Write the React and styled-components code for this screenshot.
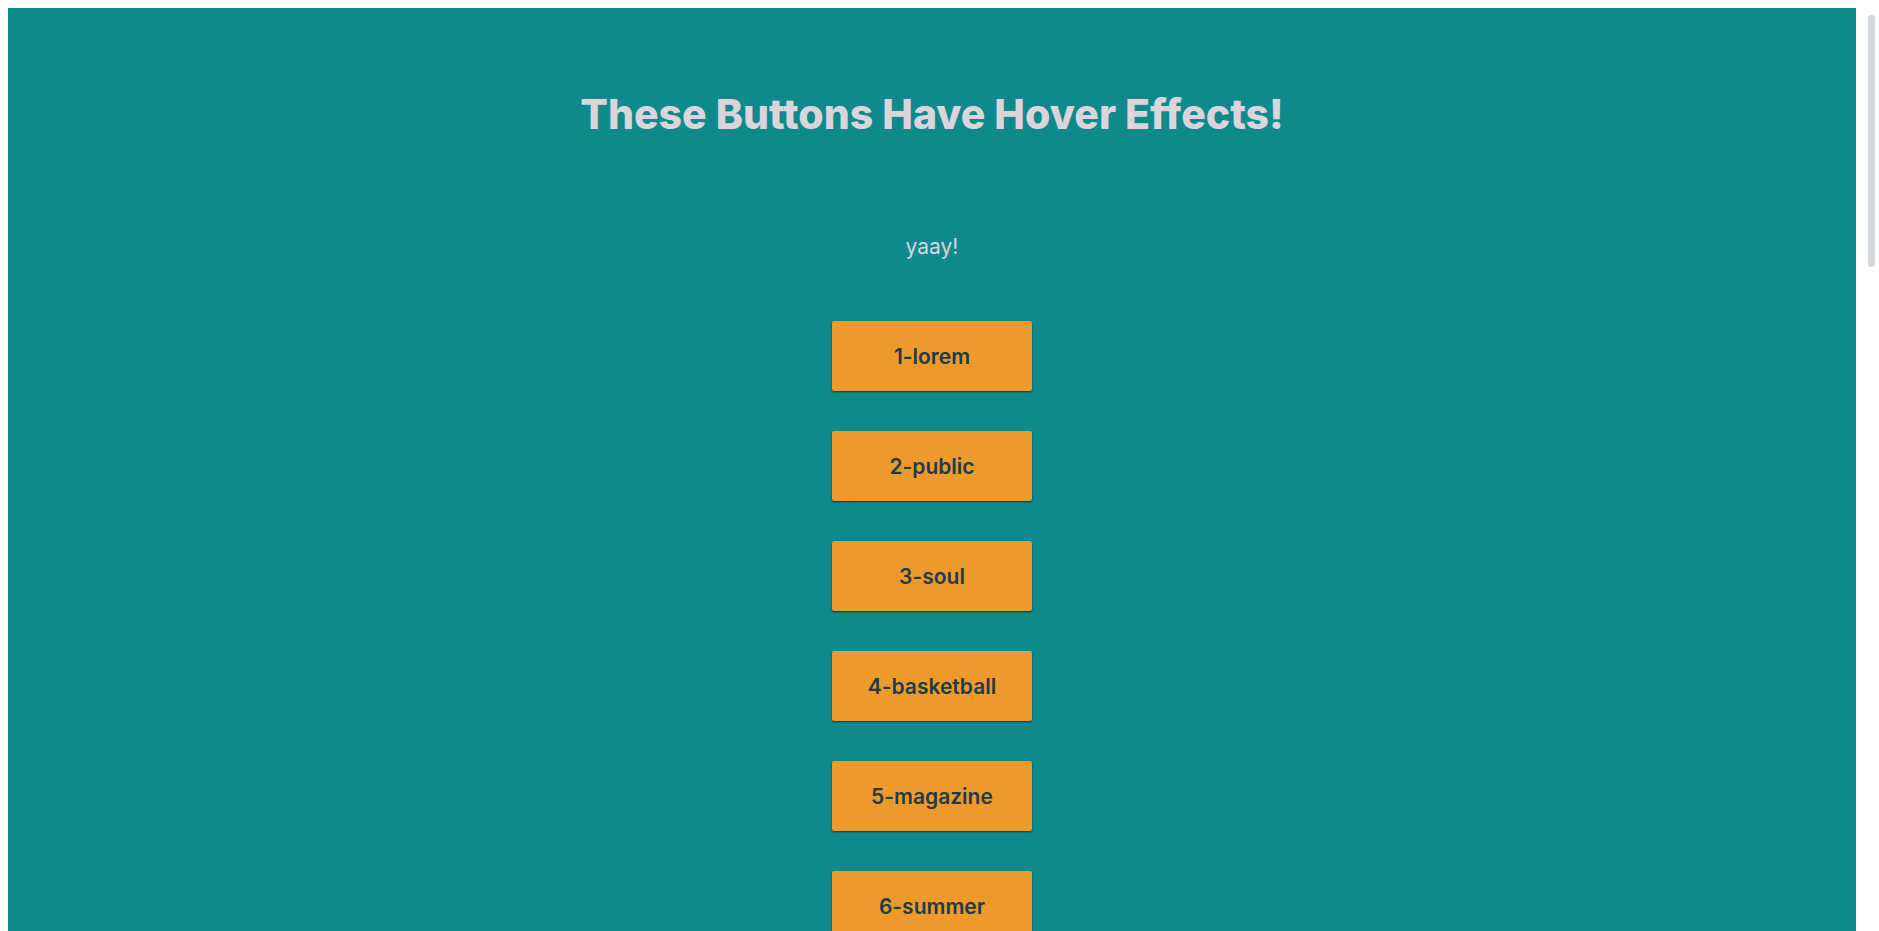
import React from 'react';
import styled, {createGlobalStyle} from 'styled-components';

// the browser scrollbar is hidden in the capture, so its strip is kept as margin
// and its thumb is drawn as a fixed overlay
const GlobalStyle = createGlobalStyle`
  body{
    margin: 8px 23px 8px 8px;
    background: white;
    font-family: Inter, "Liberation Sans", sans-serif;
  }
`;

const ScrollThumb = styled.div`
  position: fixed;
  top: 15px;
  right: 4px;
  width: 7px;
  height: 252px;
  border-radius: 4px;
  background: #d0dae3;
`;

const Page = styled.main`
  display: flex;
  flex-direction: column;
  align-items: center;
  padding: 82px 0 80px 0;
  background: #0f8a8c;
`;

const Title = styled.h1`
  margin: 0;
  font-size: 41px;
  line-height: 48px;
  font-weight: 800;
  color: #dcd4db;
`;

const Note = styled.p`
  margin: 97px 0 62px 0;
  font-size: 21px;
  line-height: 24px;
  color: #dcd4db;
`;

const ButtonList = styled.div`
  display: flex;
  flex-direction: column;
  gap: 40px;
`;

const HoverButton = styled.button`
  display: flex;
  justify-content: center;
  align-items: center;
  width: 200px;
  height: 70px;
  padding: 0;

  border: none;
  border-radius: 2px;
  background: #ec9a2b;
  color: #1d3b4a;
  box-shadow: 0 1px 2px rgba(0, 0, 0, 0.6);

  font-family: inherit;
  font-size: 21px;
  font-weight: 600;
  cursor: pointer;
  transition: 200ms;

  &:hover{
    background: #1d3b4a;
    color: #ec9a2b;
  }
`;

const words = [
    "lorem", "public", "soul", "basketball", "magazine", "summer",
    "ocean", "garden", "rocket", "window", "planet", "coffee",
    "silver", "thunder", "pencil", "forest", "mirror", "candle",
    "river", "castle", "violin", "meadow", "lantern", "harbor",
    "comet", "velvet", "falcon", "orbit"
];

const App = () => {
    return (
        <>
            <GlobalStyle/>
            <Page>
                <Title>These Buttons Have Hover Effects!</Title>
                <Note>yaay!</Note>
                <ButtonList>
                    {words.map((word, i) => (
                        <HoverButton key={word}>{(i + 1) + "-" + word}</HoverButton>
                    ))}
                </ButtonList>
            </Page>
            <ScrollThumb/>
        </>
    );
};

export default App;
